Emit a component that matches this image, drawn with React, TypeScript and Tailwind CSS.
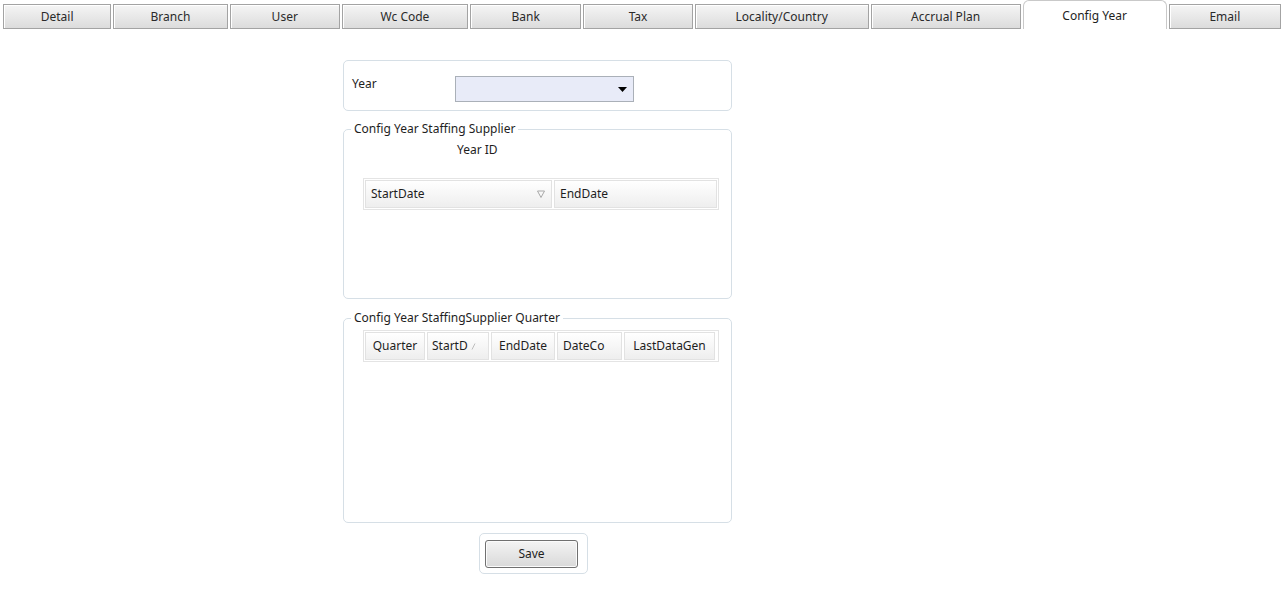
import React from "react";

const tabs = [
  { label: "Detail", w: "w-[109px]" },
  { label: "Branch", w: "w-[115px]" },
  { label: "User", w: "w-[111px]" },
  { label: "Wc Code", w: "w-[127px]" },
  { label: "Bank", w: "w-[112px]" },
  { label: "Tax", w: "w-[110px]" },
  { label: "Locality/Country", w: "w-[175px]" },
  { label: "Accrual Plan", w: "w-[151px]" },
  { label: "Config Year", w: "w-[145px]", active: true },
  { label: "Email", w: "w-[113px]" },
];

const HeaderCell = ({ children, className }: { children: React.ReactNode; className: string }) => (
  <div
    className={`h-[28px] flex items-center border border-[#e2e2e2] bg-gradient-to-b from-white to-[#eeeeee] ${className}`}
  >
    {children}
  </div>
);

const App = () => {
  return (
    <div
      className="w-[1281px] h-[605px] bg-white text-[12px] text-[#1e1e1e] overflow-hidden"
      style={{ fontFamily: '"Noto Sans", "Open Sans", sans-serif' }}
    >
      {/* tab strip */}
      <div className="flex flex-row items-end gap-[2px] pl-[3px] h-[29px]">
        {tabs.map((t) =>
          t.active ? (
            <div
              key={t.label}
              className={`${t.w} h-[29px] flex items-center justify-center bg-white border border-b-0 border-[#c9c9c9] rounded-t-[6px] pt-[1px]`}
            >
              {t.label}
            </div>
          ) : (
            <div
              key={t.label}
              className={`${t.w} h-[25px] flex items-center justify-center border border-[#a3a3a3] bg-gradient-to-b from-[#f5f5f5] to-[#dcdcdc] shadow-[inset_1px_1px_0_#ffffff] text-[#2a2a2a]`}
            >
              {t.label}
            </div>
          )
        )}
      </div>

      <div className="ml-[343px] w-[389px] flex flex-col">
        {/* year selector */}
        <div className="mt-[31px] h-[51px] border border-[#d6dfe6] rounded-[5px] flex flex-row items-start pt-[14px] pl-[8px]">
          <span className="w-[103px] leading-[18px]">Year</span>
          <div className="mt-[1px] w-[179px] h-[26px] bg-[#e8ebf8] border border-[#aab0b8] flex items-center justify-end pr-[6px]">
            <svg width="9" height="5" viewBox="0 0 9 5">
              <path d="M0 0 L9 0 L4.5 5 Z" fill="#000" />
            </svg>
          </div>
        </div>

        {/* staffing supplier group */}
        <fieldset className="mt-[10px] w-[389px] min-w-0 h-[178px] border border-[#d6dfe6] rounded-[5px] pl-[19px] pr-[11px]">
          <legend className="ml-[-12px] px-[3px] leading-[16px]">Config Year Staffing Supplier</legend>
          <div className="pl-[94px] pt-[5px] leading-[16px]">Year ID</div>
          <div className="mt-[20px] w-[356px] border border-[#e4e4e4] p-[1px] flex flex-row gap-[2px]">
            <HeaderCell className="w-[187px] pl-[5px] justify-between pr-[6px]">
              <span>StartDate</span>
              <svg width="8" height="8" viewBox="0 0 8 8">
                <path d="M0.5 1 L7.5 1 L4 7.5 Z" fill="none" stroke="#a8a8a8" strokeWidth="1" />
              </svg>
            </HeaderCell>
            <HeaderCell className="w-[163px] pl-[5px]">
              <span>EndDate</span>
            </HeaderCell>
          </div>
        </fieldset>

        {/* quarter group */}
        <fieldset className="mt-[11px] w-[389px] min-w-0 h-[213px] border border-[#d6dfe6] rounded-[5px] pl-[19px] pr-[11px]">
          <legend className="ml-[-12px] px-[3px] leading-[16px]">Config Year StaffingSupplier Quarter</legend>
          <div className="mt-[4px] w-[356px] border border-[#e4e4e4] p-[1px] flex flex-row gap-[2px]">
            <HeaderCell className="w-[60px] justify-center">Quarter</HeaderCell>
            <HeaderCell className="w-[62px] pl-[4px] gap-[3px]">
              <span>StartD</span>
              <svg width="5" height="7" viewBox="0 0 5 7">
                <path d="M1 6.5 L4 0.5" stroke="#bdbdbd" strokeWidth="1" />
              </svg>
            </HeaderCell>
            <HeaderCell className="w-[64px] justify-center">EndDate</HeaderCell>
            <HeaderCell className="w-[65px] pl-[5px]">DateCo</HeaderCell>
            <HeaderCell className="w-[91px] justify-center">LastDataGen</HeaderCell>
          </div>
        </fieldset>

        {/* save */}
        <div className="mt-[10px] ml-[136px] w-[109px] h-[41px] border border-[#d6dfe6] rounded-[5px] flex items-center pl-[5px]">
          <button className="w-[93px] h-[28px] border border-[#707070] rounded-[3px] bg-gradient-to-b from-[#f4f4f4] to-[#d9d9d9] shadow-[inset_0_0_0_1px_#fbfbfb] text-[12px] text-[#1e1e1e]">
            Save
          </button>
        </div>
      </div>
    </div>
  );
};

export default App;
